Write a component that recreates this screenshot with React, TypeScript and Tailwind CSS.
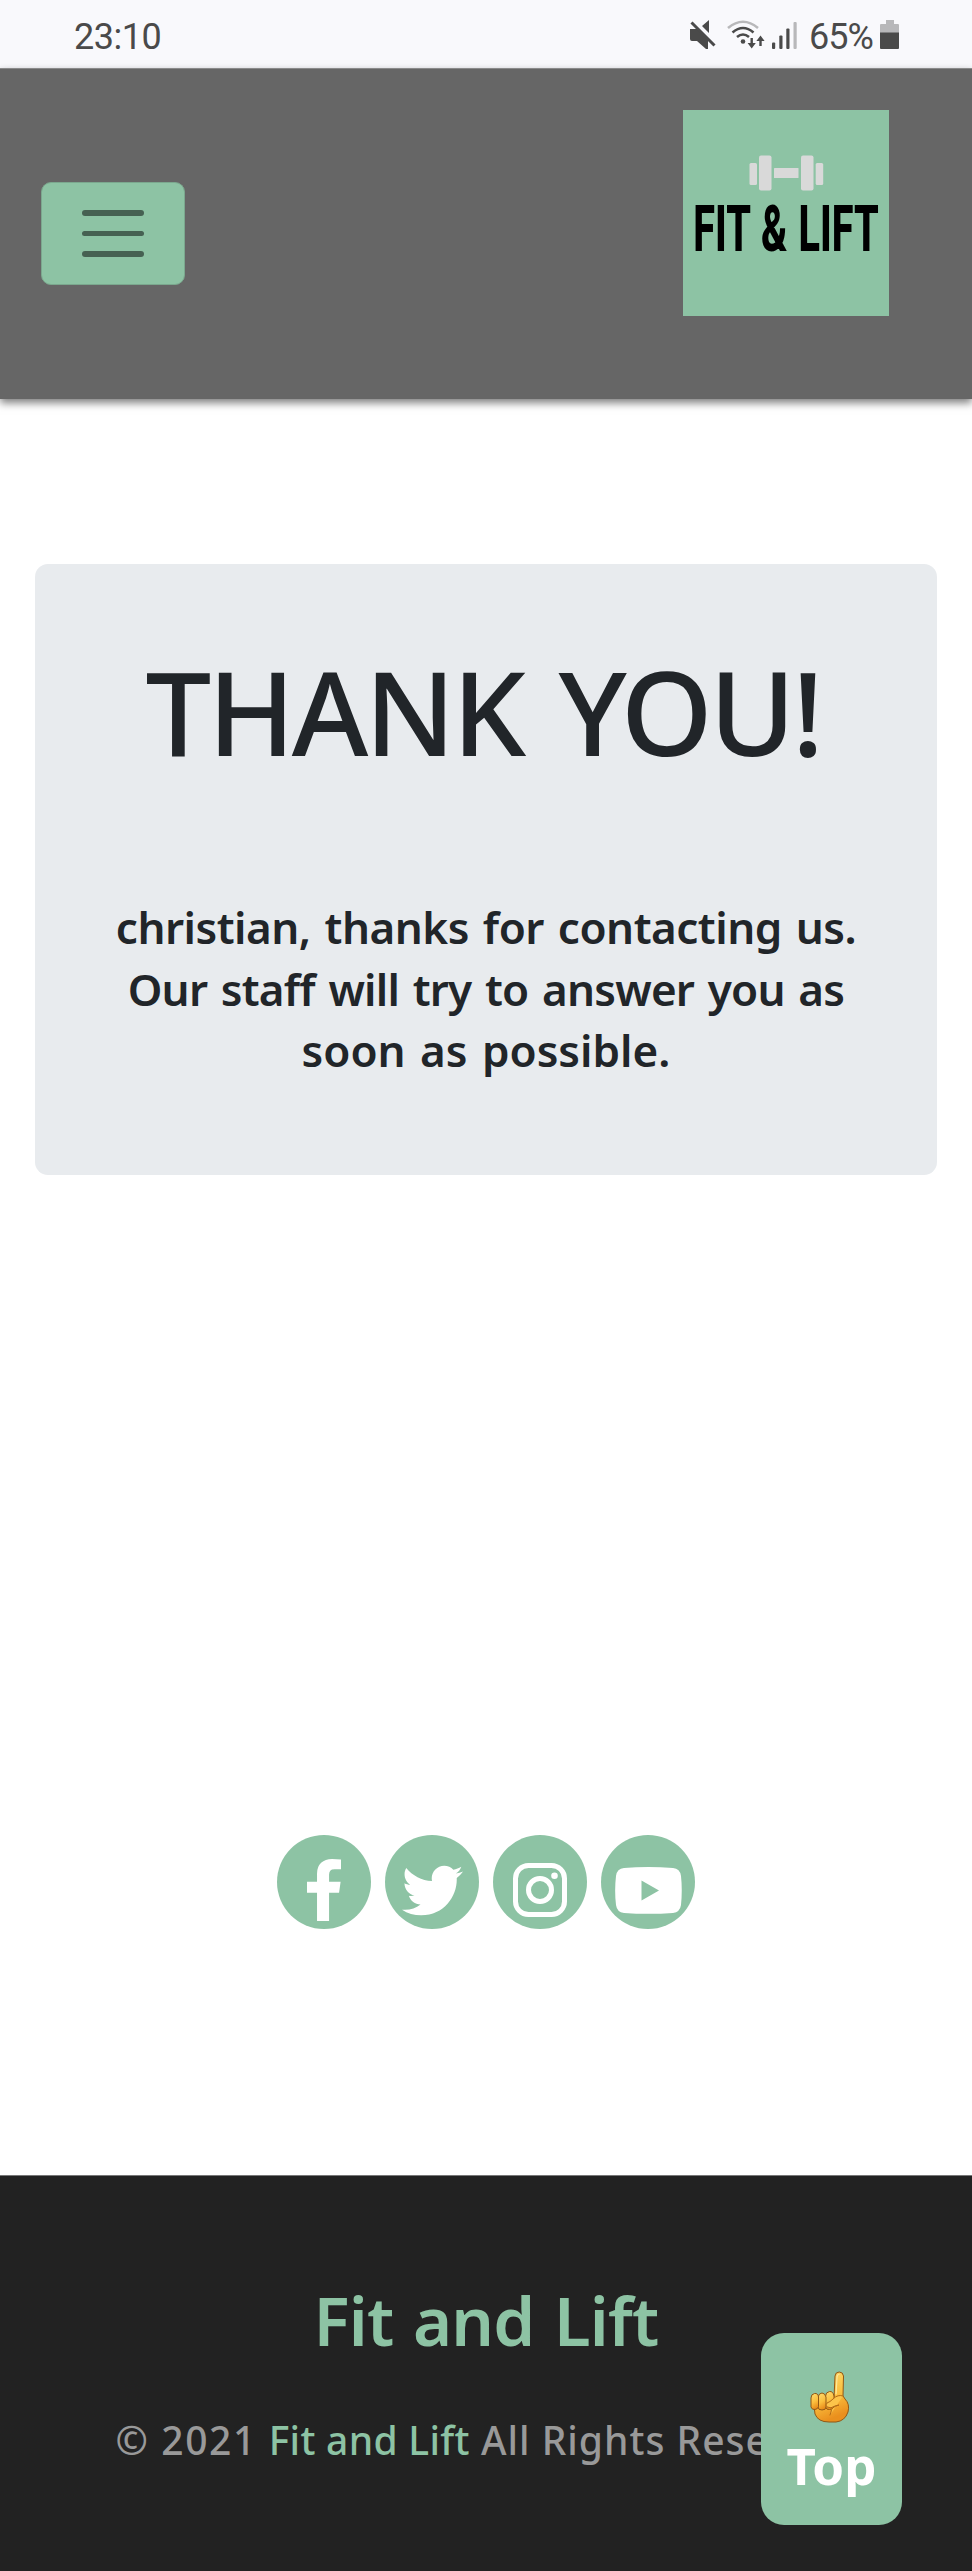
import type { ReactNode } from "react";
import { FaTwitter } from "react-icons/fa";

function StatusIcons() {
  return (
    <svg className="h-[68px] w-[122px]" viewBox="685 0 122 68" fill="#4a4a4a" aria-hidden="true">
      <path d="M690 29h7l11 10v10h-2l-9-8h-5q-2 0-2-2zM709 20v13l-7-7z" />
      <path d="M691.500 22.500 714.500 45.500" stroke="#4a4a4a" strokeWidth="3" />
      <g fill="none" strokeWidth="2.600">
        <path d="M728 28q15-12.500 30 0" stroke="#b8b8ba" />
        <path d="M732.500 32.500q10.500-9 21 0" stroke="#4a4a4a" />
        <path d="M737 37q6-5 12 0" stroke="#4a4a4a" />
      </g>
      <circle cx="743" cy="41.500" r="2.300" />
      <path d="M750.500 38h2.400v5h2.900l-4.100 5.500-4.100-5.500h2.900zM759.300 46h2.400v-5h2.900l-4.100-5.500-4.100 5.500h2.900z" />
      <rect x="772" y="42.500" width="3.200" height="6.500" rx="1" />
      <rect x="779.300" y="35.500" width="3.200" height="13.500" rx="1" />
      <rect x="786.300" y="28.500" width="3.200" height="20.500" rx="1" />
      <rect x="793.500" y="22" width="3.200" height="27" rx="1" fill="#b8b8ba" />
    </svg>
  );
}

function Battery() {
  return (
    <svg className="h-[68px] w-5" viewBox="0 0 20 68" aria-hidden="true">
      <path d="M6 24v-4h8v4h4q1 0 1 1v8H0v-8q0-1 1-1z" fill="#b8b8ba" />
      <path d="M0 32.500h19V48q0 1-1 1H1q-1 0-1-1z" fill="#4a4a4a" />
    </svg>
  );
}

function Logo() {
  return (
    <svg className="block size-[206px] bg-[#8dc3a4]" viewBox="683 110 206 206" role="img" aria-label="Fit & Lift">
      <g fill="#d9d9d9">
        <rect x="749.500" y="163" width="7.500" height="22" rx="1.500" />
        <rect x="759" y="155.500" width="12.500" height="35" rx="2" />
        <rect x="774" y="168" width="24.500" height="10" rx=".5" />
        <rect x="801" y="155.500" width="12.500" height="35" rx="2" />
        <rect x="815.700" y="163" width="7.500" height="22" rx="1.500" />
      </g>
      <text
        transform="translate(786 251) scale(0.61 1)"
        textAnchor="middle"
        wordSpacing="2"
        fontFamily="Roboto, 'Liberation Sans', sans-serif"
        fontWeight="800"
        fontSize="65"
        fill="#000"
      >
        FIT &amp; LIFT
      </text>
    </svg>
  );
}

function SocialLink({ label, children }: { label: string; children: ReactNode }) {
  return (
    <a aria-label={label} className="flex size-[94px] items-center justify-center rounded-full bg-[#8dc3a4] text-white">
      {children}
    </a>
  );
}

function PointingHand() {
  return (
    <svg className="block h-[52px] w-10" viewBox="0 0 40 52" aria-hidden="true">
      <defs>
        <linearGradient id="skin" x1="0" y1="0" x2="0.300" y2="1">
          <stop offset="0" stopColor="#ffdc70" />
          <stop offset="0.600" stopColor="#fbbf3e" />
          <stop offset="1" stopColor="#ea8f1d" />
        </linearGradient>
      </defs>
      <g fill="url(#skin)" stroke="#925715" strokeWidth="1" strokeLinejoin="round">
        <path d="M4 35 5 43q3 8 14 8h7q9-1 12-10 2-8-3-13l-2-3L33.500 5q-.5-4-4.300-4T25 5l-1 22-6 2z" />
        <path d="M24 25q-1-5-4.500-4.500-4 .5-4 5V36q1 3 4 2.500 5-.5 4.500-5z" />
        <path d="M16 26q-1-4-4-4t-4 4v10q0 3 4 3t4-3z" />
        <path d="M8.500 26q-.5-4-4-3.500T1 27v9q1 3 4 2.500t3.500-3z" />
      </g>
      <path d="M33 25q-5-2-10 3-3 3-6 4-2 2 0 4 4 2 8-1l4-1q-8 2-8 7l-1 3" fill="#fcc44a" stroke="#b36b16" strokeWidth="1" strokeLinecap="round" />
      <path d="M29 3.500q-2 0-2 3L26 23" fill="none" stroke="#ffe89b" strokeWidth="1.200" strokeLinecap="round" />
    </svg>
  );
}

export default function App() {
  return (
    <div className="relative flex h-[2571px] w-[972px] flex-col overflow-hidden bg-white font-['Noto_Sans','Open_Sans',sans-serif] text-[#212529]">
      <div className="flex h-[68px] shrink-0 items-center bg-[#f9f9fc] pl-[74px] pr-[72px] font-[Roboto,sans-serif] text-[36px] text-[#4a4a4a]">
        <span className="pt-1.5 tracking-[-0.500px]">23:10</span>
        <span className="ml-auto flex items-center">
          <StatusIcons />
          <span className="w-[73px] pl-[2px] pt-1.5 tracking-[-1px]">65%</span>
          <Battery />
        </span>
      </div>

      <header className="flex h-[331px] shrink-0 items-center justify-between border-t border-[#8a8a8a] bg-[#666666] pl-[41px] pr-[83px] shadow-[0_4px_8px_rgba(0,0,0,0.5)]">
        <button aria-label="Menu" className="mb-px flex h-[103px] w-[144px] flex-col items-center justify-center gap-[15px] rounded-[10px] border border-[#7ba88e] bg-[#8dc3a4]">
          <span className="h-[5.500px] w-[62px] rounded-full bg-[#466152]" />
          <span className="h-[5.500px] w-[62px] rounded-full bg-[#466152]" />
          <span className="h-[5.500px] w-[62px] rounded-full bg-[#466152]" />
        </button>
        <div className="mb-[43px]">
          <Logo />
        </div>
      </header>

      <main className="mx-[35px] mt-[165px] flex h-[611px] shrink-0 flex-col items-center rounded-[13px] bg-[#e8ebee] text-center">
        <h1 className="mt-[67px] whitespace-nowrap pr-[6px] text-[117px] font-medium leading-[160px] tracking-[-3.500px] [word-spacing:9px]">THANK YOU!</h1>
        <div className="mt-[106px] flex flex-col items-center whitespace-nowrap text-[44px] font-semibold leading-[61.600px] [word-spacing:3px]">
          <span className="tracking-[-0.500px]">christian, thanks for contacting us.</span>
          <span className="tracking-[-0.800px]">Our staff will try to answer you as</span>
          <span className="tracking-[0px]">soon as possible.</span>
        </div>
      </main>

      <nav className="mt-[660px] flex shrink-0 justify-center gap-[14px]">
        <SocialLink label="Facebook">
          <svg className="mt-[16px] h-[62px] w-[34px]" viewBox="479 0 864 1664" preserveAspectRatio="none" fill="currentColor">
            <path d="M1343 12v264h-157q-86 0-116 36t-30 108v189h293l-39 296h-254v759H734V905H479V609h255V391q0-186 104-288.500T1115 0q147 0 228 12z" />
          </svg>
        </SocialLink>
        <SocialLink label="Twitter">
          <FaTwitter className="mt-[16px] size-[61px]" />
        </SocialLink>
        <SocialLink label="Instagram">
          <svg className="mt-[16px] size-[54px]" viewBox="0 0 54 54" fill="none" stroke="currentColor" strokeWidth="5">
            <rect x="2.500" y="2.500" width="49" height="49" rx="13" />
            <circle cx="27" cy="27" r="11.500" />
            <circle cx="41.500" cy="12.700" r="3.300" fill="currentColor" stroke="none" />
          </svg>
        </SocialLink>
        <SocialLink label="YouTube">
          <svg className="mt-[16px] h-[47px] w-[67px]" viewBox="0 0 67 47" fill="currentColor">
            <path fillRule="evenodd" d="M9 1Q33 -.8 58 1q7 .5 8 8 1.500 14 0 29-1 7-8 8-24.500 1.700-49 0-7-.7-8-8-1.700-14.500 0-29Q2 1.500 9 1zM26.500 13.500v20l17.500-10z" />
          </svg>
        </SocialLink>
      </nav>

      <footer className="mt-auto flex h-[396px] shrink-0 flex-col items-center border-t border-[#777] bg-[#222222] text-[#999999]">
        <h2 className="mt-[98px] whitespace-nowrap text-[67px] font-semibold leading-[92px] tracking-[-0.800px] text-[#8dc3a4] [word-spacing:3px]">Fit and Lift</h2>
        <p className="mt-[47px] whitespace-nowrap text-[39px] font-medium leading-[54px]">
          <span className="tracking-[1.600px]">© 2021 </span>
          <span className="tracking-[0.300px] text-[#8dc3a4]">Fit and Lift</span>
          <span className="tracking-[1px]"> All Rights Reserved</span>
        </p>
      </footer>

      <a className="absolute left-[761px] top-[2333px] flex h-[192px] w-[141px] flex-col items-center rounded-[23px] bg-[#8dc3a4] pt-[38px] text-white">
        <span className="pr-[4px]">
          <PointingHand />
        </span>
        <span className="mt-[7px] text-[51px] font-bold leading-[70px]">Top</span>
      </a>
    </div>
  );
}
